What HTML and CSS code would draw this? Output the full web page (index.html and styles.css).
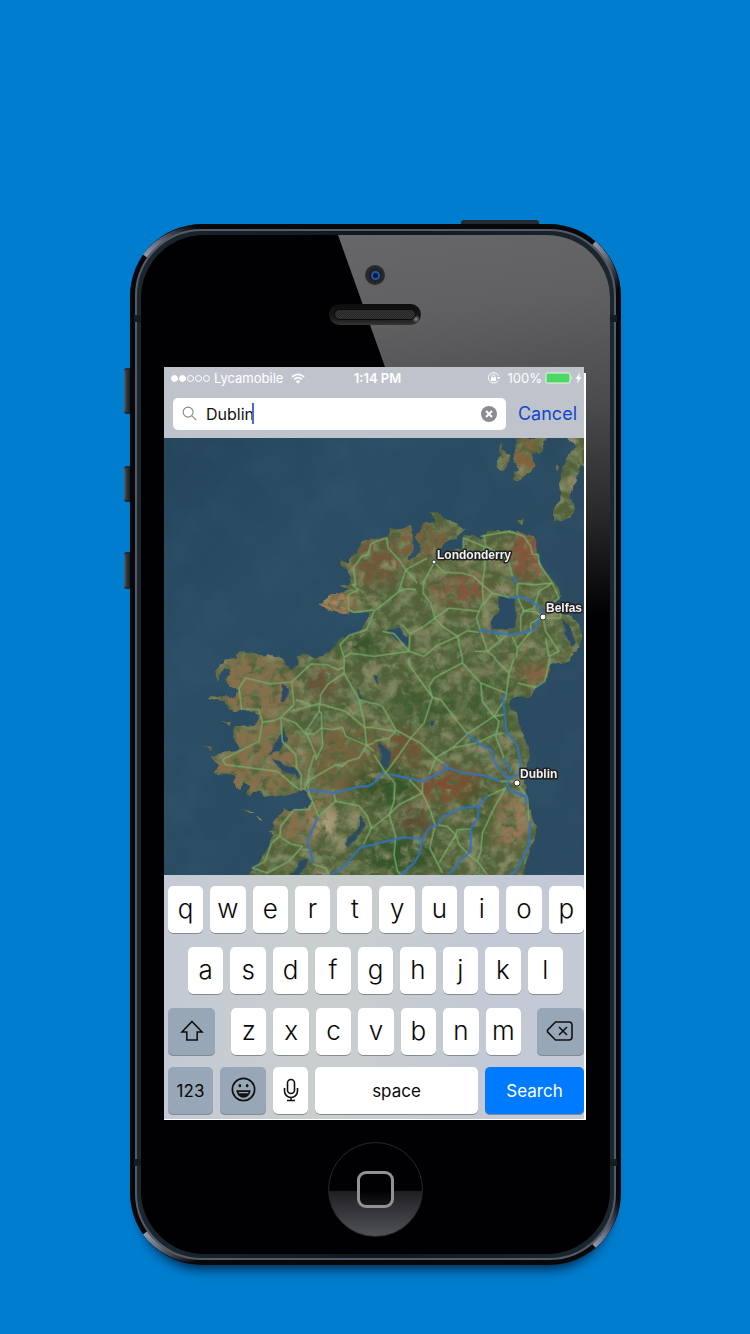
FILE: index.html
```html
<!DOCTYPE html>
<html lang="en">
<head>
<meta charset="utf-8">
<meta name="viewport" content="width=device-width, initial-scale=1">
<title>Map search</title>
<link rel="stylesheet" href="styles.css">
</head>
<body>
<main class="stage">
  <div class="phone">
    <span class="side-button power"></span>
    <span class="side-button mute"></span>
    <span class="side-button volume-up"></span>
    <span class="side-button volume-down"></span>
    <div class="shell">
    <svg class="corner top-left" viewBox="0 0 72 72"><path d="M15 32A69 69 0 0 1 66 4" /></svg>
    <svg class="corner top-right" viewBox="0 0 72 72"><path d="M19 27A69 69 0 0 1 66 4" /></svg>
    <svg class="corner bottom-left" viewBox="0 0 72 72"><path d="M15 32A69 69 0 0 1 66 4" /></svg>
    <svg class="corner bottom-right" viewBox="0 0 72 72"><path d="M19 27A69 69 0 0 1 66 4" /></svg>
    <svg width="0" height="0" class="defs"><defs><linearGradient id="shine" x1="0" y1="1" x2="1" y2="0"><stop offset="0" stop-color="#9299a8"/><stop offset=".35" stop-color="#6b7282"/><stop offset=".75" stop-color="#30343c"/><stop offset="1" stop-color="#0a0a0d"/></linearGradient></defs></svg>
    <div class="rim">
      <span class="antenna upper"></span><span class="antenna lower"></span>
      <div class="face">
        <div class="glare"></div>
        <div class="camera"><span></span></div>
        <div class="speaker"><span></span></div>

        <div class="screen">
          <header class="status">
            <span class="signal"><i class="on"></i><i class="on"></i><i></i><i></i><i></i></span>
            <span class="carrier">Lycamobile</span>
            <svg class="wifi" viewBox="0 0 14 11"><g fill="none" stroke="#fff" stroke-width="1.7"><path d="M1 4Q7-1.400 13 4"/><path d="M3.200 6.400Q7 3 10.800 6.400"/></g><path d="M7 10.700 4.700 8.200Q7 6.400 9.300 8.200Z" fill="#fff"/></svg>
            <span class="clock">1:14 PM</span>
            <svg class="lock" viewBox="0 0 14 12"><path d="M11.300 3.500A5.200 5.200 0 1 0 10.800 9" fill="none" stroke="#fff" stroke-width="1"/><path d="M9.800 5h3.600l-1.800 2.400z" fill="#fff"/><rect x="4" y="5.300" width="5" height="3.700" rx=".5" fill="#fff"/><path d="M5 5.500V4.200a1.500 1.500 0 0 1 3 0v1.300" fill="none" stroke="#fff" stroke-width=".9"/></svg>
            <span>100%</span>
            <svg class="battery" viewBox="0 0 28 12"><rect x=".5" y=".5" width="25" height="11" rx="2" fill="#e9f3ec"/><rect x="1.500" y="1.500" width="23" height="9" rx="1" fill="#4bd964"/><path d="M26.500 4.200q1.500 1.800 0 3.600z" fill="#fff"/></svg>
            <svg class="bolt" viewBox="0 0 7 12"><path d="M5 .5.500 7H3L2 11.500 6.500 5H4z" fill="#fff"/></svg>
          </header>

          <form class="search-bar" onsubmit="return false">
            <div class="field">
              <svg class="lens" viewBox="0 0 16 16"><circle cx="6.500" cy="6.500" r="5.300"/><path d="m10.500 10.500 4.800 4.500"/></svg>
              <input type="text" value="Dublin" aria-label="Search for a place">
              <span class="caret"></span>
              <button type="button" class="clear" aria-label="Clear"><svg viewBox="0 0 16 16"><path d="m5 5 6 6m0-6-6 6"/></svg></button>
            </div>
            <button type="button" class="cancel">Cancel</button>
          </form>

          <svg class="map" viewBox="0 0 420 437" preserveAspectRatio="xMidYMid slice" role="img" aria-label="Satellite map of Ireland">
            <defs>
              <linearGradient id="sea" x1="0" y1="0" x2=".6" y2=".5"><stop offset="0" stop-color="#24445b"/><stop offset=".5" stop-color="#2b4e65"/><stop offset="1" stop-color="#2a4b61"/></linearGradient>
              <filter id="rough" x="0" y="0" width="1" height="1"><feTurbulence type="fractalNoise" baseFrequency=".07" numOctaves="3" seed="4"/><feDisplacementMap in="SourceGraphic" scale="8" xChannelSelector="R" yChannelSelector="G"/></filter>
              <filter id="grain" x="0" y="0" width="1" height="1"><feTurbulence type="fractalNoise" baseFrequency=".02 .025" numOctaves="5" seed="9"/><feColorMatrix values="0 0 0 0 .46  0 0 0 0 .38  0 0 0 0 .24  2.600 0 0 0 -1.150"/></filter>
              <filter id="dark" x="0" y="0" width="1" height="1"><feTurbulence type="fractalNoise" baseFrequency=".04" numOctaves="5" seed="22"/><feColorMatrix values="0 0 0 0 .2  0 0 0 0 .29  0 0 0 0 .14  0 2.600 0 0 -1.150"/></filter>
              <filter id="soft" x="-.5" y="-.5" width="2" height="2"><feGaussianBlur stdDeviation="18" result="b"/><feTurbulence type="fractalNoise" baseFrequency=".035" numOctaves="5" seed="3"/><feColorMatrix values="0 0 0 0 1  0 0 0 0 1  0 0 0 0 1  0 0 3.500 0 -1.100" result="n"/><feComposite in="b" in2="n" operator="in"/></filter>
              <filter id="swell" x="0" y="0" width="1" height="1"><feTurbulence type="fractalNoise" baseFrequency=".02" numOctaves="5" seed="7"/><feColorMatrix values="0 0 0 0 .1  0 0 0 0 .2  0 0 0 0 .3  1.200 0 0 0 -.5"/></filter>
              <clipPath id="land"><use href="#coast"/></clipPath>
            </defs>
            <rect width="420" height="437" fill="url(#sea)"/>
            <rect width="420" height="437" filter="url(#swell)" opacity=".2"/>
            <g filter="url(#rough)">
              <g transform="scale(.33333)">
                <path id="coast" fill="#53623a" d="M240 1330 275 1285 300 1260 315 1215 325 1190 315 1185 330 1160 345 1130 360 1110 375 1125 395 1115 430 1110 440 1085 425 1060 300 1080 290 1055 270 1055 260 1075 245 1070 255 1045 235 1035 225 1050 210 1030 215 1015 190 1010 150 1005 165 985 140 955 175 945 215 940 225 920 207 900 210 870 275 860 285 835 270 820 235 815 215 825 190 810 180 790 135 780 145 770 190 780 215 775 220 755 195 745 190 720 205 710 200 695 180 690 165 720 158 735 155 710 170 675 185 660 215 665 222 645 240 640 300 653 350 650 362 664 372 685 384 692 400 680 402 658 430 652 460 662 480 650 500 635 530 610 560 590 590 580 600 560 620 520 555 522 540 525 500 520 468 500 490 470 540 465 555 450 530 440 560 435 550 400 530 380 524 365 555 375 555 355 580 345 590 310 630 308 670 290 680 270 710 275 740 260 750 290 745 340 730 362 750 365 770 340 770 310 758 290 775 260 815 255 795 220 830 230 880 260 902 275 875 300 850 315 815 340 810 365 845 345 895 335 898 295 950 300 975 285 1030 272 1080 290 1110 290 1115 320 1120 360 1140 400 1165 425 1185 450 1190 475 1160 500 1150 520 1190 530 1225 530 1245 560 1255 600 1240 640 1228 635 1215 670 1200 677 1160 680 1150 720 1120 750 1095 780 1060 775 1040 785 1035 800 1060 830 1065 870 1095 940 1100 970 1085 1000 1080 1040 1095 1110 1110 1140 1115 1190 1100 1225 1085 1270 1080 1330ZM1010 8 1000 85 1025 95 1040 50 1015 40ZM1060 2 1105 0 1150 0 1130 40 1105 45 1115 85 1090 105 1062 130 1042 125 1050 100 1070 90 1045 75 1055 40ZM1195-10 1275-10 1275 80 1250 80 1235 130 1220 180 1230 215 1220 235 1170 250 1170 210 1190 190 1185 130 1195 90 1230 30ZM1177 80 1184 85 1182 102 1177 104ZM228 1112 255 1118 268 1128 255 1128ZM275 1130 290 1136 295 1148 285 1145ZM175 850 200 850 192 858ZM118 925 145 926 140 932ZM1058 248 1080 250 1076 262Z"/>
                <g clip-path="url(#land)">
                  <rect width="1260" height="1311" filter="url(#grain)" opacity=".6"/>
                  <rect width="1260" height="1311" filter="url(#dark)" opacity=".7"/>
                  <g fill="#86704c" filter="url(#soft)"><ellipse cx="275" cy="750" rx="120" ry="105"/><ellipse cx="270" cy="960" rx="140" ry="120"/><ellipse cx="505" cy="500" rx="65" ry="50" fill="#b6805f"/><ellipse cx="640" cy="370" rx="80" ry="70" fill="#71583a"/><ellipse cx="430" cy="1140" rx="100" ry="80"/><ellipse cx="780" cy="310" rx="80" ry="60" fill="#77603e"/><ellipse cx="1090" cy="350" rx="60" ry="70" fill="#87533a"/><ellipse cx="890" cy="455" rx="90" ry="45" fill="#83573c"/><ellipse cx="1030" cy="1150" rx="60" ry="80" fill="#9b7757"/><ellipse cx="480" cy="740" rx="60" ry="40" fill="#6a5338"/><ellipse cx="1085" cy="55" rx="50" ry="60" fill="#82643f"/><ellipse cx="1120" cy="710" rx="60" ry="30" fill="#8a6041"/><ellipse cx="490" cy="1160" rx="35" ry="50" fill="#a99d7c"/><ellipse cx="560" cy="970" rx="130" ry="110" fill="#73633c"/><ellipse cx="710" cy="930" rx="70" ry="60" fill="#6f5435"/><ellipse cx="860" cy="1040" rx="110" ry="50" fill="#804f30"/><ellipse cx="750" cy="1150" rx="50" ry="50" fill="#5f4d35"/></g>
                  <g fill="#34552a" filter="url(#soft)"><ellipse cx="660" cy="1040" rx="100" ry="60"/><ellipse cx="780" cy="800" rx="100" ry="70" opacity=".6"/><ellipse cx="700" cy="1250" rx="120" ry="60"/><ellipse cx="980" cy="800" rx="90" ry="80" opacity=".5"/><ellipse cx="590" cy="620" rx="60" ry="40"/><ellipse cx="950" cy="1120" rx="60" ry="90" opacity=".6"/></g>
                </g>
                <path fill="#2b4b63" d="M1000 480 1020 475 1060 485 1055 530 1045 575 1015 570 985 575 975 555 1000 530ZM658 575 710 568 732 600 730 628 700 602ZM350 735 365 745 375 770 365 792 350 762ZM357 870 370 900 350 935 320 950 340 910ZM328 960 390 990 402 1022 370 1010 345 990ZM590 1133 605 1160 570 1210 550 1230 545 1205 575 1180ZM642 908 682 950 672 992 655 980ZM1195 542 1210 560 1232 610 1220 622 1200 590ZM380 1315 410 1265 432 1258 425 1290 400 1330ZM795 850 820 845 800 862ZM582 755 596 780 586 778ZM628 710 645 715 638 740Z"/>
              </g>
            </g>
            <g transform="scale(.33333)" fill="none" stroke-linejoin="round">
              <g id="trunk">
                <path d="M630 312 620 320 612 352 595 352 568 390 575 440 565 440 583 455 553 470 553 512 570 523 630 515M630 520 608 575 555 592 528 620 540 658 560 645 630 655"/>
                <path transform="translate(630)" d="M0 312 38 300 42 330 75 365 95 395 75 460 100 452 125 455M95 395 160 360M95 395 130 435M0 520 75 460M181 373 210 403 265 405 300 415 325 440 355 465 405 478M181 373 150 430 147 465 170 495 183 540 225 510 315 520M183 540 205 565 250 595 280 578 315 583M183 540 150 565 108 587 85 560M108 587 105 640 60 587 25 580M105 640 150 655 185 625 250 595M0 655 105 640M268 335V300L330 325 333 385 325 440 328 490 307 540 340 640M320 295 405 280 450 295 470 325 475 348 493 350 495 375 535 435 480 440 430 435M330 290 335 325 380 350 405 375 415 415M535 435 495 460 480 510 445 520M535 435 555 480 520 510M430 435 430 475 450 520 440 535 440 580M355 465 328 500M340 640 400 590M340 640H300M365 590 380 610M505 535 480 520 445 520M508 540 515 580 555 640 525 655 515 600M505 540H560V525M475 575 430 630 428 660M415 595 430 630M250 595 265 660M340 640 365 660M470 575 470 555 500 540"/>
                <path transform="translate(0 660)" d="M245 60 320 78 383 72 390 140 350 178 333 187 295 193 285 155 232 153 225 90ZM383 72 440 18 490 20 520 35 540 28V0M540 30V45L490 80 470 110 465 160 425 220 455 290V305M540 45 585 125 600 190 608 262M585 125 630 138M598 208H630M385 158 465 137 545 160 598 205M395 125 440 140M350 178 395 195 425 228H450L472 210 505 215 535 208 545 235 608 262 630 255M465 160 472 165 475 265 455 305M608 262 630 280M608 262 585 300 550 310 535 325 515 320 430 370 420 395M350 178 355 250 395 290 398 330 412 350 410 395M295 193 285 250 175 305 185 320 340 340 405 395M450 290 435 340 432 395 445 430 463 475 515 430 510 408M445 430 435 455 390 455 350 505 347 535 380 558 415 565 375 610 310 645 265 630 303 610 322 555 347 535M515 430 585 443 610 475 622 510 598 560M415 575H435M445 618 485 630 495 650M622 510 630 507"/>
                <path transform="translate(630 660)" d="M0 135 25 145 65 215 110 240 150 195 175 118 105 20V0M175 118 200 125 280 228M175 118 165 85 180 60 265 15V0M265 15 320 75 325 130 360 175 280 228 235 270 185 300 165 350M0 210 65 220 45 240 0 250M110 240 75 290 35 345 0 290M110 240 140 255 185 300 220 325M235 270 310 255 360 230 390 225M360 175 390 170M360 175 375 190 365 235 390 300M360 175 395 120M405 45 360 0M405 45 420 0M405 45 395 120M430 75 485 88 512 70 528 0M320 75 395 105M35 345 62 375 60 430 45 470 65 535 60 590 70 640 80 650M45 470 0 505M45 470 75 440 145 405 105 365M145 370V405L170 460 183 500 167 570 205 645M183 500 220 505 245 530 255 560 290 595 310 610 340 650M245 530 195 615M290 513 250 515 240 545M340 415 395 390 360 450 325 525 320 580 310 610M430 375 460 420 465 490M380 370H425"/>
              </g>
              <g id="motorway">
                <path transform="translate(630)" d="M415 415 430 435M405 478 440 476 475 490 500 510 510 535 490 550 485 570 465 580 405 590 350 582 325 575 315 583"/>
                <path transform="translate(0 660)" d="M432 395 510 405 590 385H612L630 375M460 480 430 550 448 615M500 650 530 635 590 568 630 560"/>
                <path transform="translate(630 660)" d="M0 375 30 340M45 348 145 370 225 330 205 318M225 330 265 345 330 352 380 370M280 228 315 258 352 275 360 310 395 355 405 360M395 110 387 120 397 220 430 262 440 320 435 350 405 360 400 385 415 400 455 415 458 435M390 300 410 345M468 490 465 560 445 600 430 635 405 650M340 415 312 445 255 452 210 475 190 500 165 510 145 543 90 538 0 558M145 543 135 590 120 615 80 650M312 445V480L290 513V580L260 605 245 630 220 650"/>
              </g>
            </g>
            <g class="towns"><circle cx="270" cy="124" r="2"/><circle cx="379" cy="179" r="3"/><circle cx="353" cy="345" r="3"/></g>
            <g class="labels"><text x="273" y="121">Londonderry</text><text x="382" y="174">Belfas</text><text x="356" y="340">Dublin</text></g>
          </svg>

          <div class="keyboard">
            <div class="row"><button>q</button><button>w</button><button>e</button><button>r</button><button>t</button><button>y</button><button>u</button><button>i</button><button>o</button><button>p</button></div>
            <div class="row middle"><button>a</button><button>s</button><button>d</button><button>f</button><button>g</button><button>h</button><button>j</button><button>k</button><button>l</button></div>
            <div class="row lower">
              <button class="modifier shift" aria-label="Shift"><svg viewBox="0 0 24 24"><path d="M12 2.500 22 13h-4.800v8H6.800v-8H2z"/></svg></button>
              <button>z</button><button>x</button><button>c</button><button>v</button><button>b</button><button>n</button><button>m</button>
              <button class="modifier delete" aria-label="Delete"><svg viewBox="0 0 28 22"><path d="M9.500 2H23a3 3 0 0 1 3 3v12a3 3 0 0 1-3 3H9.500L1.500 11.800V10.200ZM13 7l8 8m0-8-8 8"/></svg></button>
            </div>
            <div class="row bottom">
              <button class="modifier word numbers">123</button>
              <button class="modifier emoji" aria-label="Emoji"><svg viewBox="0 0 24 24"><circle cx="12" cy="12" r="10.700"/><path d="M6 13.500h12q-1.300 5.500-6 5.500t-6-5.500z" fill="#111"/><path d="M7.300 14.500h9.400v1.200H7.700z" fill="#97a7b7" stroke="none"/><g fill="#111" stroke="none"><ellipse cx="8.500" cy="8.300" rx="1.300" ry="1.500"/><ellipse cx="15.500" cy="8.300" rx="1.300" ry="1.500"/></g></svg></button>
              <button class="mic" aria-label="Dictate"><svg viewBox="0 0 16 24"><rect x="4.500" y="1.500" width="7" height="14" rx="3.500"/><path d="M1.500 10v3a6.500 6.500 0 0 0 13 0v-3M8 19.500v3M4 22.500h8"/></svg></button>
              <button class="word space">space</button>
              <button class="word go">Search</button>
            </div>
          </div>
        </div>

        <button class="home" aria-label="Home"><span></span></button>
      </div>
    </div>
    </div>
  </div>
</main>
</body>
</html>
```
FILE: styles.css
```css
* { box-sizing: border-box; }
body {
  margin: 0;
  min-height: 100vh;
  background: #007dcf;
  font-family: Inter, "Liberation Sans", sans-serif;
}
button { margin: 0; padding: 0; border: 0; background: none; font: inherit; color: inherit; }
.stage { padding: 224px 129px 68px 130px; }
.defs { position: absolute; }

/* Phone body */
.phone { position: relative; min-width: 420px; }
.shell {
  position: relative;
  padding: 5px;
  border-radius: 72px;
  background: #08080b;
  box-shadow: 0 14px 12px -10px rgba(0, 10, 25, .75);
}
.rim {
  position: relative;
  padding: 4px;
  border: 2px solid #555a6a;
  border-radius: 67px;
  background: linear-gradient(90deg, #1c262e, #10181f 50%, #1c262e);
}
.side-button { position: absolute; background: linear-gradient(90deg, #59616b, #2b3740 40%, #141a20); border-radius: 3px 0 0 3px; border: 1px solid #25292e; border-width: 2px 0; width: 7px; left: -6px; }
.mute { top: 144px; height: 46px; }
.volume-up { top: 242px; height: 36px; }
.volume-down { top: 328px; height: 37px; }
.power { top: -4px; right: 82px; left: auto; width: 78px; height: 6px; border-radius: 3px 3px 0 0; background: #222c36; border-width: 1px 2px; }
.corner { position: absolute; width: 72px; height: 72px; fill: none; stroke: url(#shine); stroke-width: 5; }
.top-left { top: 0; left: 0; }
.top-right { top: 0; right: 0; transform: rotate(90deg); }
.bottom-left { bottom: 0; left: 0; transform: scaleY(-1); }
.bottom-right { bottom: 0; right: 0; transform: scaleY(-1) rotate(90deg); }
.antenna { position: absolute; left: -3px; right: -3px; height: 7px; background: #141c24; }
.upper { top: 84px; }
.lower { bottom: 81px; }
.face {
  position: relative;
  display: flex;
  flex-direction: column;
  align-items: center;
  padding: 30px 24px 17px 23px;
  border-radius: 63px;
  overflow: hidden;
  background: #010103;
}
.glare {
  position: absolute;
  inset: 0;
  background: linear-gradient(172deg, #69696b, #606062 120px, #4b4b4d 230px, #29292b 340px, #010103 440px);
  clip-path: polygon(197px 0, 100% 0, 100% 100%, 560px 100%);
}
.camera {
  position: relative;
  display: grid;
  place-items: center;
  width: 20px;
  height: 20px;
  border-radius: 50%;
  background: radial-gradient(#141416, #2b2b2d 65%, #171719);
}
.camera span { width: 9px; height: 9px; border: 2px solid #2155ad; border-radius: 50%; background: #0a1a3b; }
.speaker {
  position: relative;
  width: 92px;
  height: 21px;
  margin: 19px 0 42px;
  padding: 5px;
  border-radius: 11px;
  background: radial-gradient(circle at 87px 15px, #8a8a8a, transparent 4px), linear-gradient(#0d0d0d, #1b1b1b 70%, #353535);
}
.speaker span { display: block; height: 11px; border: 1px solid #0b0b0b; border-radius: 6px; background: repeating-conic-gradient(#383838 0 25%, #242424 0 50%) 0 0 / 2px 2px; }

/* Screen */
.screen {
  position: relative;
  width: 100%;
  padding: 0 2px 1px 0;
  background: linear-gradient(#fff, #fff) 0 6px no-repeat;
}
.status {
  position: relative;
  display: flex;
  align-items: center;
  height: 22px;
  padding: 0 2px 0 7px;
  background: #bfc4cc;
  color: #fff;
  font-size: 13px;
  line-height: 22px;
}
.signal { display: flex; gap: 1px; margin-right: 4px; }
.signal i { width: 7px; height: 7px; border: 1px solid #fff; border-radius: 50%; }
.signal .on { background: #fff; }
.wifi { width: 14px; height: 11px; margin-left: 8px; }
.clock { position: absolute; left: 0; right: 0; padding-left: 7px; text-align: center; font-weight: 600; }
.lock { width: 14px; height: 12px; margin: 0 7px 0 auto; }
.battery { width: 28px; height: 12px; margin-left: 3px; }
.bolt { width: 7px; height: 12px; margin-left: 2px; }
.search-bar { display: flex; align-items: center; gap: 12px; height: 49px; padding: 0 7px 0 9px; background: #bfc4cc; }
.field { position: relative; display: flex; flex: 1; align-items: center; height: 32px; padding: 0 9px; border-radius: 5px; background: #fff; }
.lens { width: 15px; height: 15px; flex: none; fill: none; stroke: #88888c; stroke-width: 1.2; }
.field input { flex: 1; min-width: 0; margin-left: 9px; padding: 0; border: 0; outline: 0; background: none; color: #111; font: 16px Inter, "Liberation Sans", sans-serif; }
.caret { position: absolute; left: 79px; width: 2px; height: 21px; background: #416be0; }
.clear { width: 16px; height: 16px; border-radius: 50%; background: #8b8b92; }
.clear svg { display: block; fill: none; stroke: #fff; stroke-width: 2; }
.cancel { color: #1545cd; font-size: 18px; }

/* Map */
.map { display: block; width: 100%; height: auto; aspect-ratio: 420 / 437; }
#trunk { stroke: #78ad6b; stroke-width: 4; }
#motorway { stroke: #3473c0; stroke-width: 6; }
.towns { fill: #fff; stroke: #333; stroke-width: 1; }
.labels { fill: #f2f2f2; stroke: #222; stroke-width: 3; stroke-linejoin: round; paint-order: stroke; font: bold 12px "Liberation Sans", sans-serif; }

/* Keyboard */
.keyboard { padding: 11px 0 4px 4px; background: linear-gradient(90deg, #c3cad5, #c9cecf 30%, #c8cdcf 50%, #c3cad5 75%); }
.row { display: flex; gap: 7px; margin-bottom: 13px; }
.row button {
  display: flex;
  flex: 1;
  align-items: center;
  justify-content: center;
  min-width: 0;
  height: 48px;
  padding-bottom: 3px;
  border-radius: 5px;
  background: #fff;
  box-shadow: inset 0 -1px #858a91;
  color: #080808;
  font-size: 26px;
  font-weight: 300;
}
.row svg { fill: none; stroke: #111; stroke-width: 1.6; }
.middle { padding: 0 21px 0 20px; }
.lower { margin-bottom: 11px; }
.bottom { margin-bottom: 0; }
.row .modifier { flex: 0 0 47px; background: #97a7b7; }
.row .shift { margin-right: 9px; }
.row .delete { margin-left: 9px; }
.row .numbers { flex-basis: 45px; }
.row .emoji { flex-basis: 46px; }
.row .mic { flex: 0 0 35px; }
.row .word { padding-bottom: 1px; font-size: 17px; font-weight: 400; }
.row .go { flex: 0 0 99px; background: #007aff; color: #fff; }
.shift svg { width: 24px; height: 24px; }
.delete svg { width: 28px; height: 22px; }
.emoji svg { width: 25px; height: 25px; }
.mic svg { width: 16px; height: 24px; }

/* Home button */
.home {
  position: relative;
  display: grid;
  place-items: center;
  width: 95px;
  height: 95px;
  margin-top: 22px;
  border: 1px solid #29292b;
  border-radius: 50%;
  background: linear-gradient(#010103 51%, #1f1f22 52%, #505256);
}
.home span { width: 37px; height: 37px; border: 3px solid #929295; border-radius: 9px; background: linear-gradient(#010103 55%, #151517); }
```
